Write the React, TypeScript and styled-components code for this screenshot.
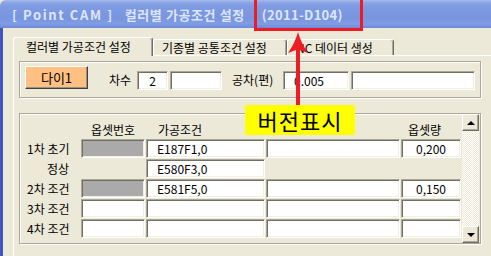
import React from "react";
import styled, {createGlobalStyle, css} from "styled-components";

const GlobalStyle = createGlobalStyle`
  html, body {
    margin: 0;
    padding: 0;
    background: #ece9d8;
  }
  body {
    font-family: "Noto Sans CJK KR", "DejaVu Sans", sans-serif;
    font-size: 12px;
    color: #000;
  }
  #root {
    width: 491px;
    height: 256px;
    overflow: hidden;
  }
`;

const tabs = [
    {label: "컬러별 가공조건 설정", width: 140, pad: 12},
    {label: "기종별 공통조건 설정", width: 134, pad: 8},
    {label: "NC 데이터 생성", width: 107, pad: 8},
];

const rows = [
    {label: "1차 초기", indent: 0, offset: "gray", cond: "E187F1,0", extra: true, amount: "0,200"},
    {label: "정상", indent: 20, offset: "none", cond: "E580F3,0", extra: false, amount: null},
    {label: "2차 조건", indent: 0, offset: "gray", cond: "E581F5,0", extra: true, amount: "0,150"},
    {label: "3차 조건", indent: 0, offset: "white", cond: "", extra: true, amount: ""},
    {label: "4차 조건", indent: 0, offset: "white", cond: "", extra: true, amount: ""},
];

export default function App() {
    return (
        <>
            <GlobalStyle/>
            <Window>
                <TitleBar>
                    <TitleBrand>[ Point CAM ]</TitleBrand>
                    <TitleCaption>컬러별 가공조건 설정</TitleCaption>
                    <TitleVersion>(2011-D104)</TitleVersion>
                </TitleBar>

                <Client>
                    <TabStrip>
                        {tabs.map((t, i) => (
                            <Tab key={t.label} $active={i === 0} $w={t.width} $pad={t.pad}>{t.label}</Tab>
                        ))}
                    </TabStrip>

                    <Panel>
                        <Frame $h={37}>
                            <DieRow>
                                <DieButton>다이1</DieButton>
                                <Caption $w={28} $ml={21}>차수</Caption>
                                <Field $w={31} $align="center">2</Field>
                                <Field $w={52} $ml={2}/>
                                <Caption $w={50} $ml={10}>공차(편)</Caption>
                                <Field $w={66} $ml={1} $pl={10}>0.005</Field>
                                <Field $w={124} $ml={2}/>
                            </DieRow>
                        </Frame>

                        <Frame $h={131}>
                            <Table>
                                <Head/>
                                <Head $pl={10}>옵셋번호</Head>
                                <Head $pl={12}>가공조건</Head>
                                <Head/>
                                <Head $pl={7}>옵셋량</Head>

                                {rows.map(r => (
                                    <React.Fragment key={r.label}>
                                        <RowLabel $indent={r.indent}>{r.label}</RowLabel>
                                        {r.offset === "none" ? <Empty/> : <Field $gray={r.offset === "gray"}/>}
                                        <Field $pl={10}>{r.cond}</Field>
                                        {r.extra ? <Field/> : <Empty/>}
                                        {r.amount === null ? <Empty/> : <Field $align="center">{r.amount}</Field>}
                                    </React.Fragment>
                                ))}
                            </Table>

                            <ScrollBar>
                                <ScrollButton><Triangle $up/></ScrollButton>
                                <ScrollTrack/>
                                <ScrollButton><Triangle/></ScrollButton>
                            </ScrollBar>
                        </Frame>
                    </Panel>
                </Client>

                <Annotation>
                    <VersionMark/>
                    <Arrow width="24" height="76" viewBox="0 0 24 76">
                        <path d="M12 1 Q15 12 22 22 L14 19 L14 76 L10 76 L10 19 L2 22 Q9 12 12 1 Z" fill="#ee1c25"/>
                    </Arrow>
                    <Callout>버전표시</Callout>
                </Annotation>
            </Window>
        </>
    );
}

const Window = styled.div`
  position: relative;
  width: 491px;
  height: 256px;
  overflow: hidden;
  display: flex;
  flex-direction: column;
  background: #ece9d8;
`;

const TitleBar = styled.div`
  flex: 0 0 28px;
  display: flex;
  align-items: center;
  padding-left: 12px;
  border-radius: 6px 0 0 0;
  background: linear-gradient(to bottom, #a9bdec 0px, #8ea8e7 2px, #7f9be2 6px, #7995df 18px, #7f9ce4 24px, #6e89d6 28px);
  color: #dde6f9;
  font-size: 13px;
  font-weight: bold;
  white-space: pre;
`;

const TitleBrand = styled.span`
  letter-spacing: 1.6px;
`;

const TitleCaption = styled.span`
  margin-left: 11px;
  letter-spacing: 0.6px;
`;

const TitleVersion = styled.span`
  margin-left: 17px;
  letter-spacing: 0.3px;
`;

const Client = styled.div`
  flex: 1;
  display: flex;
  flex-direction: column;
  border-left: 3px solid #4256c2;
  padding: 9px 0 0 10px;
`;

const TabStrip = styled.div`
  display: flex;
  align-items: flex-end;
  height: 18px;
  position: relative;
  z-index: 1;
`;

const Tab = styled.div<{ $active?: boolean, $w: number, $pad: number }>`
  box-sizing: border-box;
  width: ${p => p.$w}px;
  height: 16px;
  padding-left: ${p => p.$pad}px;
  display: flex;
  align-items: center;
  white-space: nowrap;
  background: #ece9d8;
  border-top: 1px solid #fff;
  border-left: 1px solid #fff;
  border-right: 1px solid #716f64;
  box-shadow: inset -1px 0 0 #aca899;
  border-radius: 3px 3px 0 0;

  ${({$active}) => $active && css`
    height: 19px;
    margin-bottom: -1px;
    padding-bottom: 2px;
  `}
`;

const Panel = styled.div`
  flex: 1;
  display: flex;
  flex-direction: column;
  gap: 15px;
  border-top: 1px solid #fff;
  border-left: 1px solid #fff;
  padding: 5px 0 0 5px;
`;

const Frame = styled.div<{ $h: number }>`
  box-sizing: border-box;
  width: 462px;
  height: ${p => p.$h}px;
  flex: 0 0 auto;
  display: flex;
  border: 1px solid #aca899;
  box-shadow: 1px 1px 0 #fff, inset 1px 1px 0 #fff;
`;

const DieRow = styled.div`
  flex: 1;
  display: flex;
  align-items: center;
  padding: 4px 0 6px 5px;
`;

const DieButton = styled.div`
  box-sizing: border-box;
  width: 63px;
  height: 23px;
  display: flex;
  align-items: center;
  justify-content: center;
  align-self: flex-start;
  background: #ffc082;
  border: 1px solid;
  border-color: #fff #404040 #404040 #fff;
  box-shadow: inset -1px -1px 0 #9a8f80;
  font-size: 13px;
`;

const Caption = styled.div<{ $w: number, $ml: number }>`
  width: ${p => p.$w}px;
  margin-left: ${p => p.$ml}px;
  white-space: nowrap;
  margin-top: 2px;
`;

const Field = styled.div<{ $w?: number, $ml?: number, $pl?: number, $align?: string, $gray?: boolean }>`
  box-sizing: border-box;
  width: ${p => p.$w ? `${p.$w}px` : "auto"};
  height: 19px;
  margin-left: ${p => p.$ml ?? 0}px;
  padding-left: ${p => p.$pl ?? 0}px;
  display: flex;
  align-items: center;
  justify-content: ${p => p.$align === "center" ? "center" : "flex-start"};
  background: ${p => p.$gray ? "#aaaaaa" : "#fff"};
  border: 1px solid;
  border-color: #aca899 #fff #fff #aca899;
  box-shadow: inset 1px 1px 0 #716f64, inset -1px -1px 0 #f1efe2;
  white-space: nowrap;
  ${DieRow} & {
    margin-top: 4px;
  }
`;

const Table = styled.div`
  flex: 1;
  display: grid;
  grid-template-columns: 60px 64px 119px 134px 60px;
  grid-template-rows: 18px repeat(5, 19px);
  column-gap: 1px;
  row-gap: 1px;
  align-content: start;
  padding-top: 6px;
`;

const Head = styled.div<{ $pl?: number }>`
  padding-left: ${p => p.$pl ?? 0}px;
  display: flex;
  align-items: center;
  white-space: nowrap;
`;

const RowLabel = styled.div<{ $indent: number }>`
  padding-left: ${p => 7 + p.$indent}px;
  display: flex;
  align-items: center;
  white-space: nowrap;
`;

const Empty = styled.div``;

const ScrollBar = styled.div`
  width: 17px;
  display: flex;
  flex-direction: column;
  margin-right: 1px;
`;

const ScrollButton = styled.div`
  box-sizing: border-box;
  height: 17px;
  display: flex;
  align-items: center;
  justify-content: center;
  background: #ece9d8;
  border: 1px solid;
  border-color: #fff #716f64 #716f64 #fff;
  box-shadow: inset -1px -1px 0 #aca899;
`;

const Triangle = styled.span<{ $up?: boolean }>`
  width: 0;
  height: 0;
  border-left: 4px solid transparent;
  border-right: 4px solid transparent;
  ${({$up}) => $up ? css`
    border-bottom: 4px solid #000;
  ` : css`
    border-top: 4px solid #000;
  `}
`;

const ScrollTrack = styled.div`
  flex: 1;
  background: repeating-conic-gradient(#fff 0 25%, #ece9d8 0 50%) 0 0 / 2px 2px;
`;

const Annotation = styled.div`
  position: absolute;
  inset: 0;
  z-index: 5;
  pointer-events: none;
`;

const VersionMark = styled.div`
  position: absolute;
  left: 254px;
  top: -4px;
  width: 109px;
  height: 35px;
  box-sizing: border-box;
  border: 3px solid #ec1c24;
`;

const Arrow = styled.svg`
  position: absolute;
  display: block;
  left: 286px;
  top: 31px;
  width: 24px;
  height: 76px;
`;

const Callout = styled.div`
  position: absolute;
  left: 245px;
  top: 105px;
  width: 110px;
  height: 30px;
  background: #ffff00;
  display: flex;
  align-items: center;
  justify-content: center;
  font-size: 22px;
  font-weight: 400;
  letter-spacing: 1px;
`;
